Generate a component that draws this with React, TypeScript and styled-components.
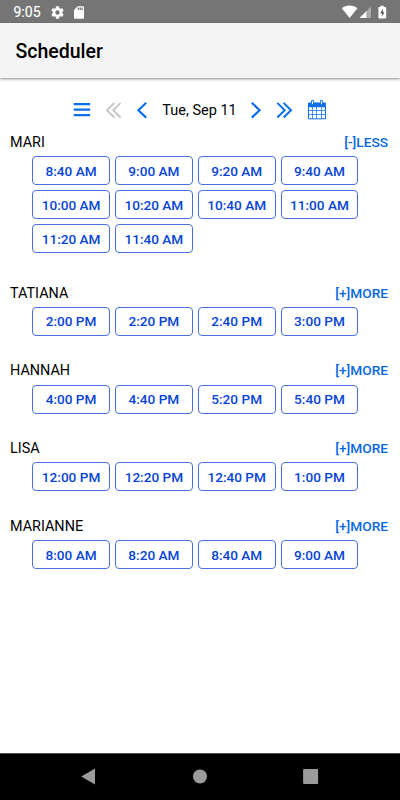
import React from "react";
import styled, { createGlobalStyle } from "styled-components";

const GlobalStyle = createGlobalStyle`
  * { box-sizing: border-box; }
  body { margin: 0; background: #fff; }
  button { font: inherit; border: 0; background: none; padding: 0; margin: 0; }
`;

const Screen = styled.div`
  width: 400px;
  height: 800px;
  display: flex;
  flex-direction: column;
  overflow: hidden;
  background: #fff;
  color: #000;
  font-family: Roboto, sans-serif;
`;

const StatusBar = styled.div`
  height: 23px;
  flex: none;
  display: flex;
  align-items: center;
  padding: 1px 13px 0 13.5px;
  background: #757575;
  color: #fff;
`;

const Clock = styled.span`
  width: 36px;
  font-size: 14px;
  font-weight: 400;
  -webkit-text-stroke: 0.15px currentColor;
  line-height: 22px;
`;

const StatusIcons = styled.div<{ $right?: boolean }>`
  display: flex;
  align-items: center;
  gap: 6px;
  margin-left: ${(p) => (p.$right ? "auto" : "0")};
  svg { display: block; }
`;

const Header = styled.header`
  height: 55px;
  flex: none;
  display: flex;
  align-items: center;
  padding: 2px 15.5px 0;
  background: #f4f4f4;
  box-shadow: 0 1px 2px rgba(0, 0, 0, 0.36), 0 2px 4px rgba(0, 0, 0, 0.1);
`;

const Title = styled.h1`
  margin: 0;
  font-size: 19.5px;
  font-weight: 500;
  line-height: 26px;
`;

const Content = styled.main`
  flex: 1;
  min-height: 0;
  padding-top: 20px;
`;

const DateNav = styled.nav`
  height: 24px;
  display: grid;
  grid-template-columns: 32px 32px 24px 90px 24px 33px 32px;
  justify-content: center;
  align-items: center;
  padding-right: 1px;
`;

const NavButton = styled.button<{ $muted?: boolean }>`
  display: flex;
  justify-content: center;
  color: ${(p) => (p.$muted ? "#c8c8c8" : "#0a6fe8")};
  svg { display: block; }
`;

const DateLabel = styled.span`
  padding: 2px 0 0 1px;
  font-size: 14.5px;
  line-height: 22px;
  text-align: center;
  white-space: nowrap;
`;

const Provider = styled.section<{ $expanded?: boolean }>`
  padding: 0 12px 0 10px;
  margin-bottom: ${(p) => (p.$expanded ? "29.6px" : "24.5px")};
  &:first-of-type { margin-top: 10px; }
`;

const ProviderHead = styled.div`
  height: 20px;
  display: flex;
  justify-content: space-between;
  font-size: 14.4px;
  line-height: 22px;
`;

const Toggle = styled.button`
  height: 20px;
  font-size: 13.7px;
  font-weight: 500;
  line-height: 20px;
  color: #0868e2;
`;

const Slots = styled.div`
  display: grid;
  grid-template-columns: repeat(4, 77.8px);
  grid-auto-rows: 29px;
  gap: 5px;
  padding: 4.2px 0 0 22.2px;
`;

const Slot = styled.button`
  border: 1px solid #4a70e0;
  border-radius: 4px;
  color: #0644d8;
  font-size: 13.6px;
  font-weight: 500;
  text-align: center;
`;

const SystemNav = styled.footer`
  height: 47px;
  flex: none;
  display: grid;
  grid-template-columns: repeat(3, 111px);
  justify-content: center;
  align-items: center;
  justify-items: center;
  background: #000;
  border-top: 1px solid #555;
  svg { display: block; }
`;

const Gear = () => (
  <svg width="15" height="15" viewBox="0 0 24 24" fill="#fff">
    <path d="M19.43 12.98c.04-.32.07-.64.07-.98s-.03-.66-.07-.98l2.11-1.65c.19-.15.24-.42.12-.64l-2-3.46c-.12-.22-.39-.3-.61-.22l-2.49 1c-.52-.4-1.08-.73-1.69-.98l-.38-2.65C14.46 2.18 14.25 2 14 2h-4c-.25 0-.46.18-.49.42l-.38 2.65c-.61.25-1.17.59-1.69.98l-2.49-1c-.23-.09-.49 0-.61.22l-2 3.46c-.13.22-.07.49.12.64l2.11 1.65c-.04.32-.07.65-.07.98s.03.66.07.98l-2.11 1.65c-.19.15-.24.42-.12.64l2 3.46c.12.22.39.3.61.22l2.49-1c.52.4 1.08.73 1.69.98l.38 2.65c.03.24.24.42.49.42h4c.25 0 .46-.18.49-.42l.38-2.65c.61-.25 1.17-.59 1.69-.98l2.49 1c.23.09.49 0 .61-.22l2-3.46c.12-.22.07-.49-.12-.64l-2.11-1.65zM12 15.5a3.5 3.5 0 1 1 0-7 3.5 3.5 0 0 1 0 7z" />
  </svg>
);

const SdCard = () => (
  <svg width="16" height="15" viewBox="0 0 24 24" fill="#fff">
    <path d="M18 2h-8L4.02 8 4 20c0 1.1.9 2 2 2h12c1.1 0 2-.9 2-2V4c0-1.1-.9-2-2-2zm-6 6h-2V4h2v4zm3 0h-2V4h2v4zm3 0h-2V4h2v4z" />
  </svg>
);

const SignalIcons = () => (
  <svg width="46" height="16" viewBox="0 0 46 16" fill="#fff">
    <path d="M.8 4.2C5 .6 12.2.6 16.4 4.2L8.6 14z" />
    <path d="M30 2.5V14H18.5z" fill="#aaa" />
    <path d="M25.3 7.2V14H18.5z" />
    <path d="M39.5 1.7h3.2v1.4h1.7a.8.8 0 0 1 .8.8v9.7a.8.8 0 0 1-.8.8h-6.2a.8.8 0 0 1-.8-.8V3.9a.8.8 0 0 1 .8-.8h1.3z" />
    <path d="M41.9 5l-2.7 4.2h1.7v3.4l2.6-4.4h-1.6z" fill="#555" />
  </svg>
);

const Menu = () => (
  <svg width="18" height="16" viewBox="0 0 18 16" fill="currentColor">
    <path d="M.7 1h16.5v2.3H.7zM.7 6.5h16.5v2.3H.7zM.7 12h16.5v2.3H.7z" />
  </svg>
);

const Chevron = ({ next }: { next?: boolean }) => (
  <svg width="12" height="18" viewBox="0 0 12 18" fill="none" stroke="currentColor" strokeWidth="2.2">
    <path d={next ? "M1.8 1.8L9.6 9.2 1.8 16.6" : "M10.2 1.8L2.4 9.2l7.8 7.4"} />
  </svg>
);

const DoubleChevron = ({ next }: { next?: boolean }) => (
  <svg width="18" height="18" viewBox="0 0 18 18" fill="none" stroke="currentColor" strokeWidth="2">
    <path
      d={
        next
          ? "M1.3 1.9L8.7 9.2l-7.4 7.3M7.6 1.9L15 9.2l-7.4 7.3"
          : "M9.3 1.9L1.9 9.2l7.4 7.3M15.6 1.9L8.2 9.2l7.4 7.3"
      }
    />
  </svg>
);

const CalendarIcon = () => (
  <svg width="20" height="20" viewBox="0 0 20 20" fill="currentColor">
    <path d="M1.8 2.6h16.3a.8.8 0 0 1 .8.8v3.9H1V3.4a.8.8 0 0 1 .8-.8z" />
    <path d="M1.5 6.5v12.3h17V6.500" fill="none" stroke="currentColor" />
    <path d="M5.5 7v11.500M9.500 7v11.500M14.500 7v11.500M2 10.500h16M2 14.500h16" fill="none" stroke="currentColor" strokeOpacity=".75" />
    <path d="M4.500.5h2v4.100h-2zM13.500.5h2v4.100h-2z" fill="#fff" stroke="currentColor" strokeWidth=".9" />
  </svg>
);

const providers = [
  {
    name: "MARI",
    expanded: true,
    times: ["8:40 AM", "9:00 AM", "9:20 AM", "9:40 AM", "10:00 AM", "10:20 AM", "10:40 AM", "11:00 AM", "11:20 AM", "11:40 AM"],
  },
  { name: "TATIANA", expanded: false, times: ["2:00 PM", "2:20 PM", "2:40 PM", "3:00 PM"] },
  { name: "HANNAH", expanded: false, times: ["4:00 PM", "4:40 PM", "5:20 PM", "5:40 PM"] },
  { name: "LISA", expanded: false, times: ["12:00 PM", "12:20 PM", "12:40 PM", "1:00 PM"] },
  { name: "MARIANNE", expanded: false, times: ["8:00 AM", "8:20 AM", "8:40 AM", "9:00 AM"] },
];

export default function App() {
  return (
    <Screen>
      <GlobalStyle />
      <StatusBar>
        <Clock>9:05</Clock>
        <StatusIcons>
          <Gear />
          <SdCard />
        </StatusIcons>
        <StatusIcons $right>
          <SignalIcons />
        </StatusIcons>
      </StatusBar>
      <Header>
        <Title>Scheduler</Title>
      </Header>
      <Content>
        <DateNav>
          <NavButton aria-label="Menu"><Menu /></NavButton>
          <NavButton aria-label="Previous week" $muted><DoubleChevron /></NavButton>
          <NavButton aria-label="Previous day"><Chevron /></NavButton>
          <DateLabel>Tue, Sep 11</DateLabel>
          <NavButton aria-label="Next day"><Chevron next /></NavButton>
          <NavButton aria-label="Next week"><DoubleChevron next /></NavButton>
          <NavButton aria-label="Calendar"><CalendarIcon /></NavButton>
        </DateNav>
        {providers.map((p) => (
          <Provider key={p.name} $expanded={p.expanded}>
            <ProviderHead>
              <span>{p.name}</span>
              <Toggle>{p.expanded ? "[-]LESS" : "[+]MORE"}</Toggle>
            </ProviderHead>
            <Slots>
              {p.times.map((t) => (
                <Slot key={t}>{t}</Slot>
              ))}
            </Slots>
          </Provider>
        ))}
      </Content>
      <SystemNav>
        <svg width="16" height="18" viewBox="0 0 16 18" fill="#9b9b9b"><path d="M.2 8.5L14 .5v16z" /></svg>
        <svg width="16" height="16" viewBox="0 0 16 16" fill="#9b9b9b"><circle cx="8" cy="7.5" r="7" /></svg>
        <svg width="16" height="16" viewBox="0 0 16 16" fill="#9b9b9b"><rect x=".1" y="0" width="15" height="15" rx="1" /></svg>
      </SystemNav>
    </Screen>
  );
}
